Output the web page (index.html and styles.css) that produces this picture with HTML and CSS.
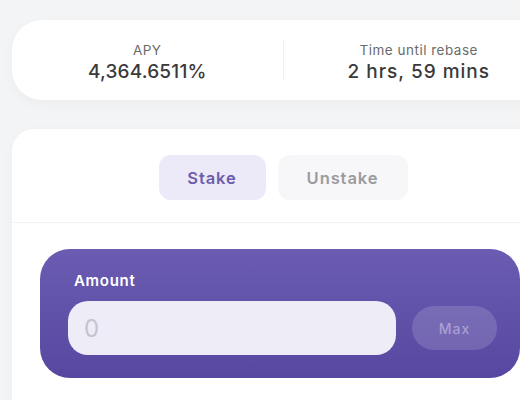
FILE: index.html
```html
<!DOCTYPE html>
<html lang="en">
<head>
    <meta charset="UTF-8">
    <meta name="viewport" content="width=device-width, initial-scale=1.0">
    <title>Stake</title>
    <link rel="stylesheet" href="styles.css">
</head>
<body>
    <div class="page">
        <div class="stats">
            <div class="stat">
                <div class="stat-label">APY</div>
                <div class="stat-value">4,364.6511%</div>
            </div>
            <div class="stat-divider"></div>
            <div class="stat">
                <div class="stat-label">Time until rebase</div>
                <div class="stat-value wide">2 hrs, 59 mins</div>
            </div>
        </div>

        <div class="stake-card">
            <div class="tabs">
                <button class="tab active">Stake</button>
                <button class="tab">Unstake</button>
            </div>
            <div class="stake-body">
                <div class="amount-box">
                    <div class="amount-label">Amount</div>
                    <div class="amount-row">
                        <input type="text" class="amount-input" placeholder="0">
                        <button class="max-btn">Max</button>
                    </div>
                </div>
            </div>
        </div>
    </div>
</body>
</html>
```

FILE: styles.css
```css
body {
    margin: 0;
    background-color: #f3f4f6;
    font-family: Inter, "Open Sans", sans-serif;
    overflow: hidden;
}
.page {
    padding: 20px 0 0 12px;
    width: 542px;
}
.stats {
    display: flex;
    align-items: center;
    height: 80px;
    background: white;
    border-radius: 30px;
    box-shadow: 0 4px 14px rgba(0,0,0,0.03);
}
.stat {
    flex: 1;
    text-align: center;
    padding-top: 6px;
}
.stat-label {
    font-size: 13.5px;
    color: #6b6b6b;
    line-height: 17px;
    letter-spacing: 0.5px;
}
.stat-value {
    font-size: 19px;
    font-weight: 500;
    color: #3a3a3a;
    line-height: 25px;
    letter-spacing: 0.2px;
}
.stat-value.wide {
    letter-spacing: 1px;
}
.stat-divider {
    width: 1px;
    height: 40px;
    background: #f1f1f3;
}
.stake-card {
    margin-top: 29px;
    background: white;
    border-radius: 22px;
    height: 300px;
    box-shadow: 0 4px 14px rgba(0,0,0,0.03);
}
.tabs {
    display: flex;
    justify-content: center;
    gap: 12px;
    padding: 26px 0 22px;
    border-bottom: 1px solid #f2f2f4;
}
.tab {
    width: 130px;
    height: 45px;
    border: none;
    border-radius: 12px;
    font-family: inherit;
    font-size: 16.5px;
    font-weight: 600;
    letter-spacing: 0.9px;
    background: #f7f7f9;
    color: #9b9b9f;
    cursor: pointer;
}
.tab.active {
    width: 107px;
    background: #eceaf8;
    color: #6c5ead;
}
.stake-body {
    padding: 26px 0 0 28px;
}
.amount-box {
    width: 480px;
    height: 129px;
    box-sizing: border-box;
    padding: 22px 0 0 28px;
    border-radius: 30px;
    background: linear-gradient(#6b5cb2, #5747a0);
}
.amount-label {
    color: white;
    font-size: 15px;
    font-weight: 600;
    line-height: 20px;
    letter-spacing: 0.7px;
    padding-left: 6px;
}
.amount-row {
    display: flex;
    align-items: center;
    gap: 16px;
    margin-top: 10px;
}
.amount-input {
    width: 328px;
    height: 54px;
    box-sizing: border-box;
    border: none;
    border-radius: 20px;
    background: #eeedf7;
    padding: 0 16px;
    font-family: inherit;
    font-size: 24px;
    outline: none;
}
.amount-input::placeholder {
    color: #c4c4ca;
}
.max-btn {
    width: 85px;
    height: 44px;
    border: none;
    border-radius: 22px;
    background: rgba(255,255,255,0.15);
    color: #a99fd6;
    font-family: inherit;
    font-size: 14px;
    font-weight: 500;
    letter-spacing: 1px;
    cursor: pointer;
}
```
